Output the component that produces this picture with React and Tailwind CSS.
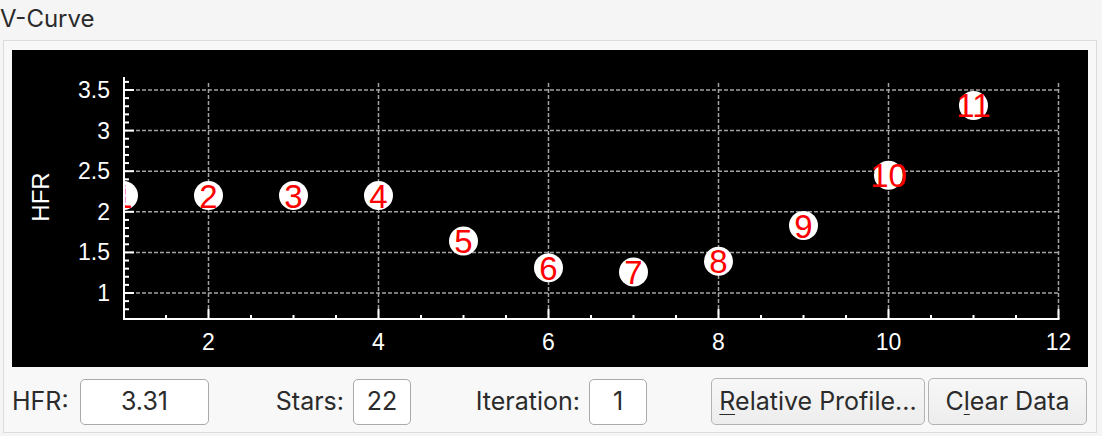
import React from "react";

const X = (v) => 111.5 + (v - 1) * 85;
const Y = (v) => 243 - (v - 1) * 81.2;

const points = [2.2, 2.2, 2.2, 2.2, 1.64, 1.31, 1.26, 1.39, 1.83, 2.45, 3.31];

function VCurveChart() {
  const yTicks = [];
  for (let i = 8; i <= 36; i++) yTicks.push(i / 10);
  const xTicks = [];
  for (let i = 3; i <= 24; i++) xTicks.push(i / 2);

  return (
    <svg width="1076" height="317" viewBox="0 0 1076 317" className="block">
      <defs>
        <clipPath id="plot">
          <rect x="112" y="0" width="964" height="269" />
        </clipPath>
      </defs>

      {/* grid */}
      {[1, 1.5, 2, 2.5, 3, 3.5].map((v) => (
        <line key={"h" + v} x1="112" x2={X(12)} y1={Y(v)} y2={Y(v)} stroke="#a3a3a3" strokeWidth="1.5" strokeDasharray="4 2" />
      ))}
      {[2, 4, 6, 8, 10, 12].map((v) => (
        <line key={"v" + v} x1={X(v)} x2={X(v)} y1="33" y2="269" stroke="#a3a3a3" strokeWidth="1.5" strokeDasharray="4 2" />
      ))}

      {/* points */}
      <g clipPath="url(#plot)" fontFamily="Liberation Sans, Arial, sans-serif">
        {points.map((hfr, i) => (
          <g key={i}>
            <circle cx={X(i + 1)} cy={Y(hfr)} r="14.5" fill="#ffffff" />
            <text x={X(i + 1)} y={Y(hfr) + 12} textAnchor="middle" fontSize="33" fill="#ff0000">
              {i + 1}
            </text>
          </g>
        ))}
      </g>

      {/* axes */}
      <line x1="112" x2="112" y1="27" y2="270" stroke="#fff" strokeWidth="2" />
      <line x1="111" x2={X(12) + 1} y1="269" y2="269" stroke="#fff" strokeWidth="2" />
      {yTicks.map((v) => {
        const major = Math.round(v * 10) % 5 === 0;
        return <line key={"yt" + v} x1="112" x2={major ? 122 : 117} y1={Y(v)} y2={Y(v)} stroke="#fff" strokeWidth="2" />;
      })}
      {xTicks.map((v) => {
        const major = v % 2 === 0;
        return <line key={"xt" + v} x1={X(v)} x2={X(v)} y1="269" y2={major ? 259 : 265} stroke="#fff" strokeWidth="2" />;
      })}

      {/* labels */}
      <g fontFamily="Liberation Sans, Arial, sans-serif" fill="#fff" fontSize="23">
        {[1, 1.5, 2, 2.5, 3, 3.5].map((v) => (
          <text key={"yl" + v} x="98" y={Y(v) + 8} textAnchor="end">
            {v}
          </text>
        ))}
        {[2, 4, 6, 8, 10, 12].map((v) => (
          <text key={"xl" + v} x={X(v)} y="300" textAnchor="middle">
            {v}
          </text>
        ))}
        <text x="28" y="156" fontSize="24" textAnchor="middle" transform="rotate(-90 28 147)">
          HFR
        </text>
      </g>
    </svg>
  );
}

function Field({ value, width }) {
  return (
    <div className={`h-[46px] ${width} bg-white border border-[#a9a9a9] rounded-[5px] flex items-center justify-center`}>
      {value}
    </div>
  );
}

export default function App() {
  return (
    <div className="w-[1102px] h-[436px] overflow-hidden bg-[#f5f5f5] font-['Inter',sans-serif] text-[#2b2b2b]">
      <div className="h-[40px] pt-[4px] leading-[30px] text-[24px]">V-Curve</div>
      <div className="ml-[3px] w-[1094px] border border-[#dcdcdc] bg-[#f8f8f8] px-[8px] pt-[9px] pb-[7px]">
        <div className="h-[317px] bg-black">
          <VCurveChart />
        </div>
        <div className="mt-[11px] h-[47px] flex items-center text-[25px]">
          <div className="w-[68px]">HFR:</div>
          <Field value="3.31" width="w-[129px]" />
          <div className="w-[144px] text-right pr-[9px]">Stars:</div>
          <Field value="22" width="w-[58px]" />
          <div className="w-[178px] text-right pr-[9px]">Iteration:</div>
          <Field value="1" width="w-[58px]" />
          <div className="w-[64px]" />
          <button className="h-[47px] w-[214px] rounded-[5px] border border-[#b3b3b3] bg-gradient-to-b from-[#f7f7f7] to-[#ededed] flex items-center justify-center">
            <span>
              <span className="underline underline-offset-[4px] decoration-1">R</span>elative Profile...
            </span>
          </button>
          <button className="ml-[3px] h-[47px] w-[159px] rounded-[5px] border border-[#b3b3b3] bg-gradient-to-b from-[#f7f7f7] to-[#ededed] flex items-center justify-center">
            <span>
              C<span className="underline underline-offset-[4px] decoration-1">l</span>ear Data
            </span>
          </button>
        </div>
      </div>
    </div>
  );
}
